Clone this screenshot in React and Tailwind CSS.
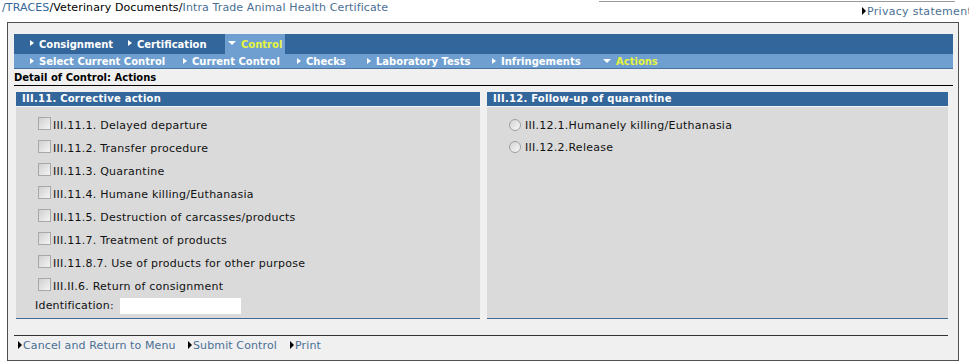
import React from "react";

const RightTri = ({ color = "border-l-white" }) => (
  <span className={`inline-block w-0 h-0 border-y-[3px] border-y-transparent border-l-[4px] ${color} mr-[5px] align-middle relative top-[-1px]`} />
);
const DownTri = () => (
  <span className="inline-block w-0 h-0 border-x-[4px] border-x-transparent border-t-[4px] border-t-white mr-[5px] align-middle relative top-[-1px]" />
);
const LinkTri = () => (
  <span className="inline-block w-0 h-0 border-y-[4px] border-y-transparent border-l-[4px] border-l-black mr-[1px] align-middle relative top-[-1px]" />
);

const Checkbox = () => (
  <span className="inline-block w-[13px] h-[13px] border border-[#a8a8a8] bg-gradient-to-br from-[#d0d0d0] to-[#f4f4f4] shrink-0" />
);
const Radio = () => (
  <span className="inline-block w-[12px] h-[12px] rounded-full border border-[#a0a0a0] bg-gradient-to-br from-[#d4d4d4] to-[#f8f8f8] shrink-0" />
);

const checks = [
  "III.11.1. Delayed departure",
  "III.11.2. Transfer procedure",
  "III.11.3. Quarantine",
  "III.11.4. Humane killing/Euthanasia",
  "III.11.5. Destruction of carcasses/products",
  "III.11.7. Treatment of products",
  "III.11.8.7. Use of products for other purpose",
  "III.II.6. Return of consignment",
];

export default function App() {
  return (
    <div className="w-[969px] h-[362px] bg-white overflow-hidden font-['DejaVu_Sans',Verdana,sans-serif] text-[11px] text-[#222]">
      <div className="flex h-[22px]">
        <div className="pl-[2px] pt-[1px] leading-[14px] whitespace-nowrap tracking-[0.12px]">
          <span className="text-[#336699]">/TRACES</span>
          <span className="text-black">/Veterinary Documents/</span>
          <span className="text-[#4a6f94]">Intra Trade Animal Health Certificate</span>
        </div>
        <div className="flex-1 flex flex-col items-end">
          <div className="w-[356px] mr-[14px] border-t border-[#9a9a9a] h-[1px] mt-[1px]" />
          <div className="mt-[3px] leading-[14px] whitespace-nowrap text-[#4a6f94] w-[107px] overflow-hidden tracking-[0.3px]">
            <LinkTri />Privacy statement
          </div>
        </div>
      </div>

      <div className="ml-[7px] w-[952px] h-[339px] border border-[#505050] bg-[#f0f0f0] pt-[11px] pl-[6px] pr-[5px] flex flex-col">
        <div className="h-[20px] bg-[#33669a] flex items-stretch text-white font-bold text-[10px]">
          <div className="pl-[16px] w-[114px] flex items-center"><RightTri />Consignment</div>
          <div className="w-[97px] flex items-center"><RightTri />Certification</div>
          <div className="w-[60px] bg-[#6f9fd0] flex items-center pl-[3px] text-[#e6f53c]"><DownTri />Control</div>
        </div>
        <div className="h-[14px] bg-[#6f9fd0] border-b border-[#4b73a0] box-content flex items-center text-white font-bold text-[10px] whitespace-nowrap">
          <div className="pl-[16px] w-[169px]"><RightTri />Select Current Control</div>
          <div className="w-[114px]"><RightTri />Current Control</div>
          <div className="w-[70px]"><RightTri />Checks</div>
          <div className="w-[125px]"><RightTri />Laboratory Tests</div>
          <div className="w-[111px]"><RightTri />Infringements</div>
          <div className="text-[#e6f53c]"><DownTri />Actions</div>
        </div>
        <div className="h-[17px] border-b border-black font-bold text-black text-[10px] flex items-end pb-[1px] leading-[13px]">
          Detail of Control: Actions
        </div>

        <div className="flex gap-[7px] px-[2px] mt-[6px]">
          <div className="w-[464px] flex flex-col">
            <div className="h-[14px] bg-[#33669a] text-white font-bold text-[10px] tracking-[0.25px] pl-[6px] leading-[14px] border-b border-[#f4f4f4] box-content">
              III.11. Corrective action
            </div>
            <div className="h-[212px] bg-[#dadada] border-b border-[#3f6a94] pl-[22px] pt-[10px] flex flex-col">
              {checks.map((c) => (
                <div key={c} className="h-[23px] flex items-start gap-[2px]">
                  <Checkbox />
                  <span className="leading-[13px] mt-[2px] text-[#111] tracking-[0.25px]">{c}</span>
                </div>
              ))}
              <div className="flex items-center -ml-[3px] -mt-[3px]">
                <span className="w-[85px] text-[#111] tracking-[0.2px]">Identification:</span>
                <span className="w-[121px] h-[16px] bg-white" />
              </div>
            </div>
          </div>
          <div className="w-[461px] flex flex-col">
            <div className="h-[14px] bg-[#33669a] text-white font-bold text-[10px] tracking-[0.25px] pl-[6px] leading-[14px] border-b border-[#f4f4f4] box-content">
              III.12. Follow-up of quarantine
            </div>
            <div className="h-[212px] bg-[#dadada] border-b border-[#3f6a94] pl-[22px] pt-[12px] flex flex-col">
              <div className="h-[22px] flex items-start gap-[4px]">
                <Radio />
                <span className="leading-[13px] text-[#111] tracking-[0.25px]">III.12.1.Humanely killing/Euthanasia</span>
              </div>
              <div className="h-[22px] flex items-start gap-[4px]">
                <Radio />
                <span className="leading-[13px] text-[#111] tracking-[0.25px]">III.12.2.Release</span>
              </div>
            </div>
          </div>
        </div>

        <div className="mt-[16px] w-[934px] border-t border-[#333]" />
        <div className="flex pl-[4px] mt-[3px] leading-[14px] text-[#4a6f94] whitespace-nowrap tracking-[0.12px]">
          <div className="w-[170px]"><LinkTri />Cancel and Return to Menu</div>
          <div className="w-[102px]"><LinkTri />Submit Control</div>
          <div><LinkTri />Print</div>
        </div>
      </div>
    </div>
  );
}
